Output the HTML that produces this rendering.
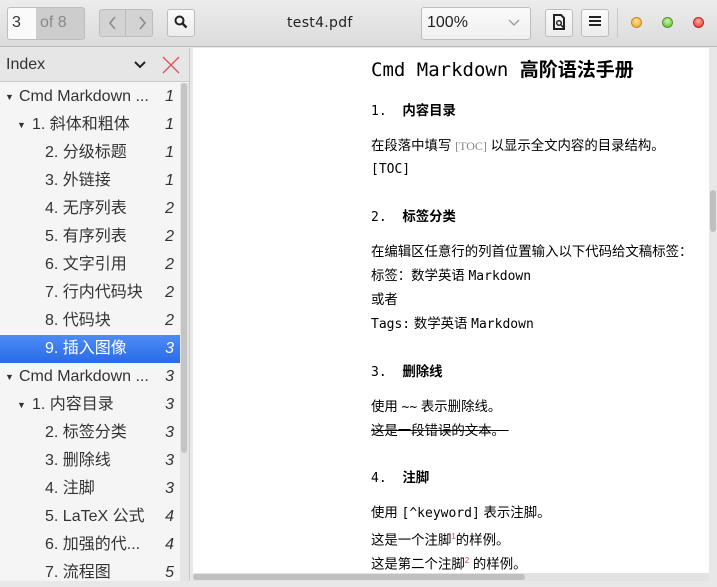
<!DOCTYPE html><html><head><meta charset="utf-8"><style>
*{margin:0;padding:0;box-sizing:border-box}
body{width:717px;height:581px;overflow:hidden;background:#e8e8e8;font-family:"Liberation Sans","Noto Sans CJK SC",sans-serif;position:relative}
.tb{position:absolute;left:0;top:0;width:717px;height:47px;background:linear-gradient(#ececec,#dcdcdc);border-bottom:1px solid #b8b8b8}
.a{position:absolute}
.btn{position:absolute;border:1px solid #bdbdbd;border-radius:3px;background:linear-gradient(#fbfbfb,#ececec)}
.side{position:absolute;left:0;top:48px;width:190px;height:533px;background:#f5f5f5;border-right:1px solid #c8c8c8}
.hdr{position:absolute;left:0;top:0;width:189px;height:34px;background:#e6e6e6;border-bottom:1px solid #c9c9c9;font-size:16px;color:#333}
.row{position:absolute;left:0;width:180px;height:28px;font-size:16px;color:#333;line-height:28px}
.row .n{position:absolute;right:6px;font-style:italic}
.sel{background:linear-gradient(#4d8cf5,#2a6ae8);color:#fff}
.doc{position:absolute;left:193px;top:48px;width:516px;height:525px;background:#fff}
.t{position:absolute;left:178px;font-size:13.4px;color:#000;white-space:nowrap;line-height:16px}
.m{font-family:"DejaVu Sans Mono","Liberation Mono",monospace;font-size:13px}
.b{font-weight:bold}
</style></head><body>
<div class="tb">
 <div class="btn" style="left:7px;top:7px;width:78px;height:33px;background:#cdcdcd"></div>
 <div class="a" style="left:8px;top:8px;width:28px;height:31px;background:#fafafa;border-radius:2px 0 0 2px"></div>
 <div class="a" style="left:12px;top:14px;font-size:16px;color:#333">3</div>
 <div class="a" style="left:40px;top:14px;font-size:16px;color:#888">of 8</div>
 <div class="btn" style="left:99px;top:9px;width:54px;height:28px;background:#d3d3d3"></div>
 <div class="a" style="left:125px;top:10px;width:1px;height:26px;background:#bbb"></div>
 <svg class="a" style="left:107px;top:15px" width="40" height="16"><path d="M8 2L3 8l5 6M33 2l5 6-5 6" stroke="#8a8a8a" fill="none" stroke-width="1.6"/></svg>
 <div class="btn" style="left:167px;top:9px;width:28px;height:28px"></div>
 <svg class="a" style="left:174px;top:15px" width="14" height="14"><circle cx="5.5" cy="5.5" r="4" stroke="#222" stroke-width="2" fill="none"/><line x1="8.5" y1="8.5" x2="12.5" y2="12.5" stroke="#222" stroke-width="2.4"/></svg>
 <div class="a" style="left:287px;top:15px;font-size:14px;color:#222;font-family:'DejaVu Sans',sans-serif;letter-spacing:.3px">test4.pdf</div>
 <div class="btn" style="left:421px;top:7px;width:110px;height:33px;background:linear-gradient(#fafafa,#f0f0f0)"></div>
 <div class="a" style="left:427px;top:14px;font-size:16px;color:#222">100%</div>
 <svg class="a" style="left:508px;top:19px" width="12" height="8"><path d="M1 1l5 5 5-5" stroke="#999" fill="none" stroke-width="1.3"/></svg>
 <div class="btn" style="left:545px;top:9px;width:28px;height:28px"></div>
 <svg class="a" style="left:552px;top:14px" width="14" height="17"><path d="M2 1h7l3 3v11H2z" fill="none" stroke="#222" stroke-width="2"/><circle cx="7" cy="9" r="2.3" stroke="#222" stroke-width="1.5" fill="none"/><path d="M8.5 10.5l3 3" stroke="#222" stroke-width="1.5"/></svg>
 <div class="btn" style="left:581px;top:9px;width:28px;height:28px"></div>
 <div class="a" style="left:589px;top:16px;width:12px;height:2px;background:#222;box-shadow:0 4px 0 #222,0 8px 0 #222"></div>
 <div class="a" style="left:617px;top:8px;width:1px;height:30px;background:#c8c8c8"></div>
 <div class="a" style="left:631px;top:17px;width:11px;height:11px;border-radius:50%;background:radial-gradient(circle at 50% 35%,#fde49a,#e9a31b);border:1px solid #c48a1a"></div>
 <div class="a" style="left:662px;top:17px;width:11px;height:11px;border-radius:50%;background:radial-gradient(circle at 50% 35%,#c8f5a6,#55b928);border:1px solid #4c9a2a"></div>
 <div class="a" style="left:693px;top:17px;width:11px;height:11px;border-radius:50%;background:radial-gradient(circle at 50% 35%,#fbb0a6,#e22c23);border:1px solid #b72a22"></div>
</div>
<div class="side">
 <div class="hdr"><span class="a" style="left:6px;top:8px">Index</span>
  <svg class="a" style="left:134px;top:13px" width="12" height="8"><path d="M1 1l5 5 5-5" stroke="#222" fill="none" stroke-width="2"/></svg>
  <svg class="a" style="left:162px;top:8px" width="18" height="18"><path d="M1 1l16 16M17 1L1 17" stroke="#e0505a" stroke-width="1.3"/></svg>
 </div>
 <div class="a" style="left:180px;top:35px;width:9px;height:498px;background:#e4e4e4"></div>
 <div class="a" style="left:181px;top:35px;width:6px;height:370px;background:#c4c4c4;border-radius:3px"></div>
 <div class="row" style="top:35px"><span class="a" style="left:5px;font-size:9px">▼</span><span class="a" style="left:19px">Cmd Markdown ...</span><span class="n">1</span></div>
 <div class="row" style="top:63px"><span class="a" style="left:17px;font-size:9px">▼</span><span class="a" style="left:32px">1. 斜体和粗体</span><span class="n">1</span></div>
 <div class="row" style="top:91px"><span class="a" style="left:45px">2. 分级标题</span><span class="n">1</span></div>
 <div class="row" style="top:119px"><span class="a" style="left:45px">3. 外链接</span><span class="n">1</span></div>
 <div class="row" style="top:147px"><span class="a" style="left:45px">4. 无序列表</span><span class="n">2</span></div>
 <div class="row" style="top:175px"><span class="a" style="left:45px">5. 有序列表</span><span class="n">2</span></div>
 <div class="row" style="top:203px"><span class="a" style="left:45px">6. 文字引用</span><span class="n">2</span></div>
 <div class="row" style="top:231px"><span class="a" style="left:45px">7. 行内代码块</span><span class="n">2</span></div>
 <div class="row" style="top:259px"><span class="a" style="left:45px">8. 代码块</span><span class="n">2</span></div>
 <div class="row sel" style="top:287px"><span class="a" style="left:45px">9. 插入图像</span><span class="n">3</span></div>
 <div class="row" style="top:315px"><span class="a" style="left:5px;font-size:9px">▼</span><span class="a" style="left:19px">Cmd Markdown ...</span><span class="n">3</span></div>
 <div class="row" style="top:343px"><span class="a" style="left:17px;font-size:9px">▼</span><span class="a" style="left:32px">1. 内容目录</span><span class="n">3</span></div>
 <div class="row" style="top:371px"><span class="a" style="left:45px">2. 标签分类</span><span class="n">3</span></div>
 <div class="row" style="top:399px"><span class="a" style="left:45px">3. 删除线</span><span class="n">3</span></div>
 <div class="row" style="top:427px"><span class="a" style="left:45px">4. 注脚</span><span class="n">3</span></div>
 <div class="row" style="top:455px"><span class="a" style="left:45px">5. LaTeX 公式</span><span class="n">4</span></div>
 <div class="row" style="top:483px"><span class="a" style="left:45px">6. 加强的代...</span><span class="n">4</span></div>
 <div class="row" style="top:511px"><span class="a" style="left:45px">7. 流程图</span><span class="n">5</span></div>
</div>
<div class="doc">
 <div class="t" style="top:10px;font-size:19px;line-height:24px"><span class="m" style="font-size:19px">Cmd Markdown </span><b>高阶语法手册</b></div>
 <div class="t" style="top:55px"><span class="m">1.&nbsp; </span><b>内容目录</b></div>
 <div class="t" style="top:90px">在段落中填写 <span style="font-family:'Liberation Serif',serif;color:#888;font-size:12px">[TOC]</span> 以显示全文内容的目录结构。</div>
 <div class="t m" style="top:114px">[TOC]</div>
 <div class="t" style="top:161px"><span class="m">2.&nbsp; </span><b>标签分类</b></div>
 <div class="t" style="top:196px">在编辑区任意行的列首位置输入以下代码给文稿标签：</div>
 <div class="t" style="top:220px">标签：数学英语 <span class="m">Markdown</span></div>
 <div class="t" style="top:244px">或者</div>
 <div class="t" style="top:268px"><span class="m">Tags:</span> 数学英语 <span class="m">Markdown</span></div>
 <div class="t" style="top:316px"><span class="m">3.&nbsp; </span><b>删除线</b></div>
 <div class="t" style="top:351px">使用 <span class="m">~~</span> 表示删除线。</div>
 <div class="t" style="top:375px;text-decoration:line-through">这是一段错误的文本。&nbsp;</div>
 <div class="t" style="top:422px"><span class="m">4.&nbsp; </span><b>注脚</b></div>
 <div class="t" style="top:457px">使用 <span class="m">[^keyword]</span> 表示注脚。</div>
 <div class="t" style="top:481px">这是一个注脚<sup style="color:#e0308a;font-size:8px">1</sup>的样例。</div>
 <div class="t" style="top:505px">这是第二个注脚<sup style="color:#e0308a;font-size:8px">2</sup> 的样例。</div>
</div>
<div class="a" style="left:709px;top:48px;width:8px;height:525px;background:#e8e8e8"></div>
<div class="a" style="left:710px;top:190px;width:6px;height:42px;background:#c0c0c0;border-radius:3px"></div>
<div class="a" style="left:193px;top:573px;width:516px;height:8px;background:#e2e2e2"></div>
<div class="a" style="left:193px;top:574px;width:332px;height:6px;background:#c0c0c0;border-radius:3px"></div>
</body></html>
